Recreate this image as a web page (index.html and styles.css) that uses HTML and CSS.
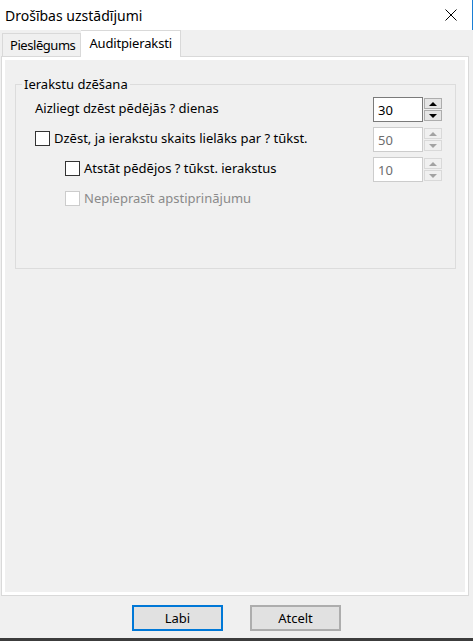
FILE: index.html
```html
<!DOCTYPE html>
<html lang="lv">
<head>
<meta charset="utf-8">
<title>Drošības uzstādījumi</title>
<link rel="stylesheet" href="styles.css">
</head>
<body>
<div class="window">
  <div class="titlebar">
    <span class="title">Drošības uzstādījumi</span>
    <svg class="close" width="12" height="12" viewBox="0 0 12 12"><path d="M0.5 0.5L11.5 11.5M11.5 0.5L0.5 11.5" stroke="#000" stroke-width="1" fill="none"/></svg>
  </div>
  <div class="client">
    <div class="tabs">
      <div class="tab">Pieslēgums</div>
      <div class="tab active">Auditpieraksti</div>
    </div>
    <div class="panel">
      <div class="page">
        <fieldset class="group">
          <legend>Ierakstu dzēšana</legend>
          <div class="row">
            <span class="label">Aizliegt dzēst pēdējās ? dienas</span>
            <div class="spin">
              <div class="num focus">30</div>
              <div class="arrows"><span class="up"></span><span class="down"></span></div>
            </div>
          </div>
          <div class="row">
            <label class="check"><span class="box"></span><span>Dzēst, ja ierakstu skaits lielāks par ? tūkst.</span></label>
            <div class="spin disabled">
              <div class="num">50</div>
              <div class="arrows"><span class="up"></span><span class="down"></span></div>
            </div>
          </div>
          <div class="row indent">
            <label class="check"><span class="box"></span><span>Atstāt pēdējos ? tūkst. ierakstus</span></label>
            <div class="spin disabled">
              <div class="num">10</div>
              <div class="arrows"><span class="up"></span><span class="down"></span></div>
            </div>
          </div>
          <div class="row indent">
            <label class="check disabled"><span class="box"></span><span>Nepieprasīt apstiprinājumu</span></label>
          </div>
        </fieldset>
      </div>
    </div>
    <div class="footer">
      <button class="btn default">Labi</button>
      <button class="btn">Atcelt</button>
    </div>
  </div>
  <div class="strip"></div>
</div>
</body>
</html>
```

FILE: styles.css
```css
* { box-sizing: border-box; }
html, body { margin: 0; padding: 0; }
body {
  width: 473px;
  height: 641px;
  overflow: hidden;
  background: #f0f0f0;
  font-family: "Noto Sans", "Open Sans", sans-serif;
  font-size: 13px;
  color: #000;
}
.window {
  display: flex;
  flex-direction: column;
  height: 641px;
}
.titlebar {
  flex: none;
  height: 30px;
  background: #fff;
  border-right: 1px solid #1a7fd4;
  display: flex;
  align-items: center;
  justify-content: space-between;
  padding: 0 15px 0 5px;
}
.title { font-size: 14px; }
.close { display: block; }

.client {
  flex: 1;
  display: flex;
  flex-direction: column;
  padding: 0 4px 0 1px;
  min-height: 0;
}
.tabs {
  flex: none;
  height: 26px;
  display: flex;
  align-items: flex-end;
  padding-left: 1px;
}
.tab {
  height: 23px;
  padding: 0 5px 0 7px;
  border: 1px solid #d9d9d9;
  border-bottom: none;
  display: flex;
  align-items: center;
  background: #f0f0f0;
  letter-spacing: -0.45px;
}
.tab.active {
  height: 27px;
  margin-bottom: -1px;
  background: #fff;
  padding: 0 8px 0 8px;
  border-left: none;
  position: relative;
  z-index: 1;
  padding-bottom: 2px;
  letter-spacing: -0.15px;
}
.panel {
  flex: 1;
  border: 1px solid #d9d9d9;
  background: #fff;
  padding: 3px;
  display: flex;
  min-height: 0;
}
.page {
  flex: 1;
  background: #f0f0f0;
  padding: 15px 9px 0 10px;
}
.group {
  margin: 0;
  border: 1px solid #dcdcdc;
  padding: 0 13px 55px 6px;
  min-width: 0;
}
.group legend {
  padding: 0 2px;
  line-height: 18px;
}
.row {
  height: 30px;
  display: flex;
  align-items: center;
  justify-content: space-between;
  padding-left: 13px;
}
.row.indent { padding-left: 43px; }
.check {
  display: flex;
  align-items: center;
  gap: 4px;
}
.box {
  width: 15px;
  height: 15px;
  border: 1px solid #333;
  background: #fff;
}
.check.disabled { color: #8a8a8a; }
.check.disabled .box { border-color: #ccc; }

.spin {
  display: flex;
  gap: 1px;
  margin-top: 3px;
}
.num {
  width: 50px;
  height: 25px;
  border: 1px solid #ccc;
  background: #fff;
  padding-left: 4px;
  display: flex;
  align-items: center;
  color: #6d6d6d;
}
.num.focus { border-color: #7a7a7a; color: #000; }
.arrows {
  display: flex;
  flex-direction: column;
  gap: 1px;
  padding-top: 1px;
}
.arrows span {
  width: 18px;
  height: 11px;
  background: #e5e5e5;
  border: 1px solid #adadad;
  display: flex;
  align-items: center;
  justify-content: center;
}
.arrows .up::before {
  content: "";
  border-left: 4px solid transparent;
  border-right: 4px solid transparent;
  border-bottom: 4px solid #000;
}
.arrows .down::before {
  content: "";
  border-left: 4px solid transparent;
  border-right: 4px solid transparent;
  border-top: 4px solid #000;
}
.spin.disabled .arrows span {
  background: #f0f0f0;
  border-color: #d9d9d9;
}
.spin.disabled .arrows .up::before { border-bottom-color: #a3a3a3; }
.spin.disabled .arrows .down::before { border-top-color: #a3a3a3; }

.footer {
  flex: none;
  height: 42px;
  display: flex;
  justify-content: center;
  align-items: flex-start;
  gap: 27px;
  padding-top: 9px;
  padding-left: 3px;
}
.btn {
  width: 91px;
  height: 26px;
  border: 2px solid #adadad;
  background: #e1e1e1;
  font-family: inherit;
  font-size: 13px;
  color: #000;
  padding: 0;
}
.btn.default { border-color: #0078d7; }
.strip {
  flex: none;
  height: 3px;
  background: #3c3c3c;
}
```
